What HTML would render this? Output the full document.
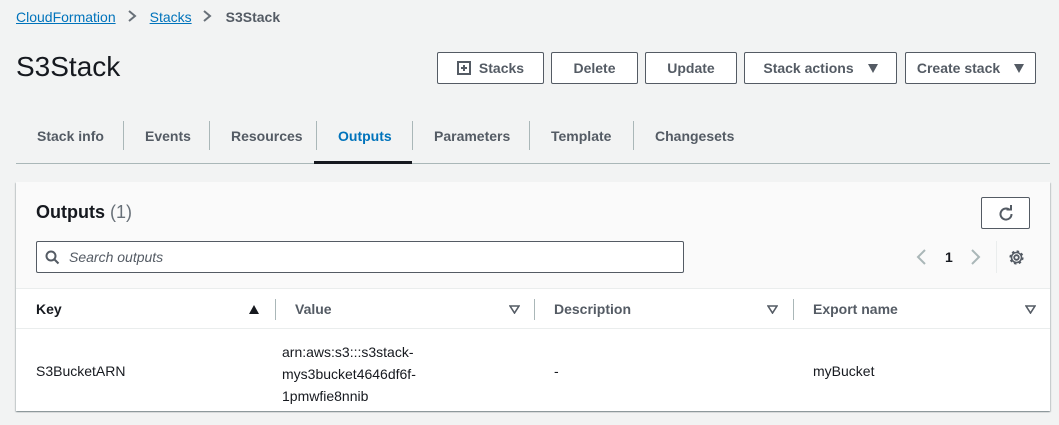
<!DOCTYPE html><html><head><style>
*{box-sizing:border-box;margin:0;padding:0}
body{width:1059px;height:425px;background:#f2f3f3;font-family:"Liberation Sans",sans-serif;color:#16191f;position:relative;overflow:hidden;font-size:14px}
.a{position:absolute;white-space:nowrap}
.bc a{color:#0073bb;text-decoration:underline}
.btn{position:absolute;top:52px;height:32px;border:1px solid #545b64;border-radius:2px;background:#fff;font-weight:bold;color:#545b64;font-size:14px;display:flex;align-items:center;justify-content:center;gap:8px}
.dt{width:0;height:0;border-left:5px solid transparent;border-right:5px solid transparent;border-top:9px solid #545b64}
.tab{position:absolute;top:128px;font-weight:bold;color:#545b64;font-size:14px}
.sep{position:absolute;top:121px;width:1px;height:29px;background:#aab7b8}
.hs{position:absolute;top:299px;width:1px;height:21px;background:#aab7b8}
.th{position:absolute;top:301px;font-weight:bold;color:#545b64}
.tri{position:absolute;top:305px;width:0;height:0}
.ot{position:absolute;top:305px}
</style></head><body>
<div class="a bc" style="left:16px;top:9px;font-size:14px"><a>CloudFormation</a><svg width="34" height="12" viewBox="0 0 34 12"><path d="M13 1l6 5-6 5" fill="none" stroke="#687078" stroke-width="2"/></svg><a>Stacks</a><svg width="34" height="12" viewBox="0 0 34 12"><path d="M12 1l6 5-6 5" fill="none" stroke="#687078" stroke-width="2"/></svg><span style="color:#545b64;font-weight:bold">S3Stack</span></div>
<div class="a" style="left:16px;top:51px;font-size:28px">S3Stack</div>
<div class="btn" style="left:437px;width:107px"><svg width="14" height="14"><rect x="1" y="1" width="12" height="12" fill="none" stroke="#545b64" stroke-width="2"/><path d="M7 4v6M4 7h6" stroke="#545b64" stroke-width="2"/></svg>Stacks</div>
<div class="btn" style="left:551px;width:87px">Delete</div>
<div class="btn" style="left:645px;width:92px">Update</div>
<div class="btn" style="left:744px;width:153px;gap:14px">Stack actions <div class="dt"></div></div>
<div class="btn" style="left:905px;width:131px;gap:14px">Create stack <div class="dt"></div></div>
<div class="tab" style="left:37px">Stack info</div><div class="sep" style="left:123px"></div>
<div class="tab" style="left:145px">Events</div><div class="sep" style="left:209px"></div>
<div class="tab" style="left:231px">Resources</div><div class="sep" style="left:316px"></div>
<div class="tab" style="left:338px;color:#0073bb">Outputs</div><div class="sep" style="left:412px"></div>
<div class="tab" style="left:434px">Parameters</div><div class="sep" style="left:529px"></div>
<div class="tab" style="left:551px">Template</div><div class="sep" style="left:633px"></div>
<div class="tab" style="left:655px">Changesets</div>
<div class="a" style="left:16px;top:163px;width:1034px;height:1px;background:#aab7b8"></div>
<div class="a" style="left:314px;top:161px;width:98px;height:3px;background:#16191f"></div>
<div class="a" style="left:16px;top:182px;width:1034px;height:229px;background:#fff;box-shadow:0 1px 1px rgba(0,28,36,.3),1px 1px 1px rgba(0,28,36,.15),-1px 1px 1px rgba(0,28,36,.15)"></div>
<div class="a" style="left:16px;top:182px;width:1034px;height:107px;background:#fafafa;border-bottom:1px solid #eaeded"></div>
<div class="a" style="left:36px;top:202px;font-size:18px;font-weight:bold">Outputs <span style="font-weight:normal;color:#687078">(1)</span></div>
<div class="a" style="left:981px;top:197px;width:49px;height:32px;border:1px solid #545b64;border-radius:2px;background:#fff"><svg style="position:absolute;left:15px;top:7px" width="18" height="18" viewBox="0 0 18 18"><path d="M14.5 9a5.5 5.5 0 1 1-1.8-4" fill="none" stroke="#545b64" stroke-width="2"/><path d="M9.5 3.5h4.5v-4.5" fill="none" stroke="#545b64" stroke-width="2" transform="translate(0 1)"/></svg></div>
<div class="a" style="left:36px;top:241px;width:648px;height:32px;border:1px solid #545b64;border-radius:2px;background:#fff"><svg style="position:absolute;left:8px;top:8px" width="15" height="15"><circle cx="6" cy="6" r="4.5" fill="none" stroke="#545b64" stroke-width="2"/><path d="M9.5 9.5l4 4" stroke="#545b64" stroke-width="2"/></svg><span style="position:absolute;left:32px;top:7px;font-style:italic;color:#545b64">Search outputs</span></div>
<svg class="a" style="left:915px;top:249px" width="12" height="16"><path d="M10 1l-7 7 7 7" fill="none" stroke="#aab7b8" stroke-width="2"/></svg>
<div class="a" style="left:945px;top:249px;font-weight:bold">1</div>
<svg class="a" style="left:970px;top:249px" width="12" height="16"><path d="M2 1l7 7-7 7" fill="none" stroke="#aab7b8" stroke-width="2"/></svg>
<div class="a" style="left:996px;top:241px;width:1px;height:32px;background:#eaeded"></div>
<svg class="a" style="left:1008px;top:249px" width="17" height="17" viewBox="0 0 17 17"><circle cx="8.5" cy="8.5" r="2.3" fill="none" stroke="#545b64" stroke-width="1.8"/><circle cx="8.5" cy="8.5" r="6" fill="none" stroke="#545b64" stroke-width="2.2" stroke-dasharray="2.4 2.3"/><circle cx="8.5" cy="8.5" r="5" fill="none" stroke="#545b64" stroke-width="1.6"/></svg>
<div class="th" style="left:36px;color:#16191f">Key</div>
<div class="tri" style="left:249px;border-left:5px solid transparent;border-right:5px solid transparent;border-bottom:9px solid #16191f"></div>
<div class="hs" style="left:275px"></div>
<div class="th" style="left:295px">Value</div>
<svg class="ot" style="left:509px" width="11" height="9"><path d="M1 1h9l-4.5 7z" fill="none" stroke="#545b64" stroke-width="1.6"/></svg>
<div class="hs" style="left:534px"></div>
<div class="th" style="left:554px">Description</div>
<svg class="ot" style="left:767px" width="11" height="9"><path d="M1 1h9l-4.5 7z" fill="none" stroke="#545b64" stroke-width="1.6"/></svg>
<div class="hs" style="left:793px"></div>
<div class="th" style="left:813px">Export name</div>
<svg class="ot" style="left:1025px" width="11" height="9"><path d="M1 1h9l-4.5 7z" fill="none" stroke="#545b64" stroke-width="1.6"/></svg>
<div class="a" style="left:16px;top:328px;width:1034px;height:1px;background:#eaeded"></div>
<div class="a" style="left:36px;top:363px">S3BucketARN</div>
<div class="a" style="left:282px;top:341px;line-height:22px">arn:aws:s3:::s3stack-<br>mys3bucket4646df6f-<br>1pmwfie8nnib</div>
<div class="a" style="left:554px;top:363px">-</div>
<div class="a" style="left:813px;top:363px">myBucket</div>
</body></html>
